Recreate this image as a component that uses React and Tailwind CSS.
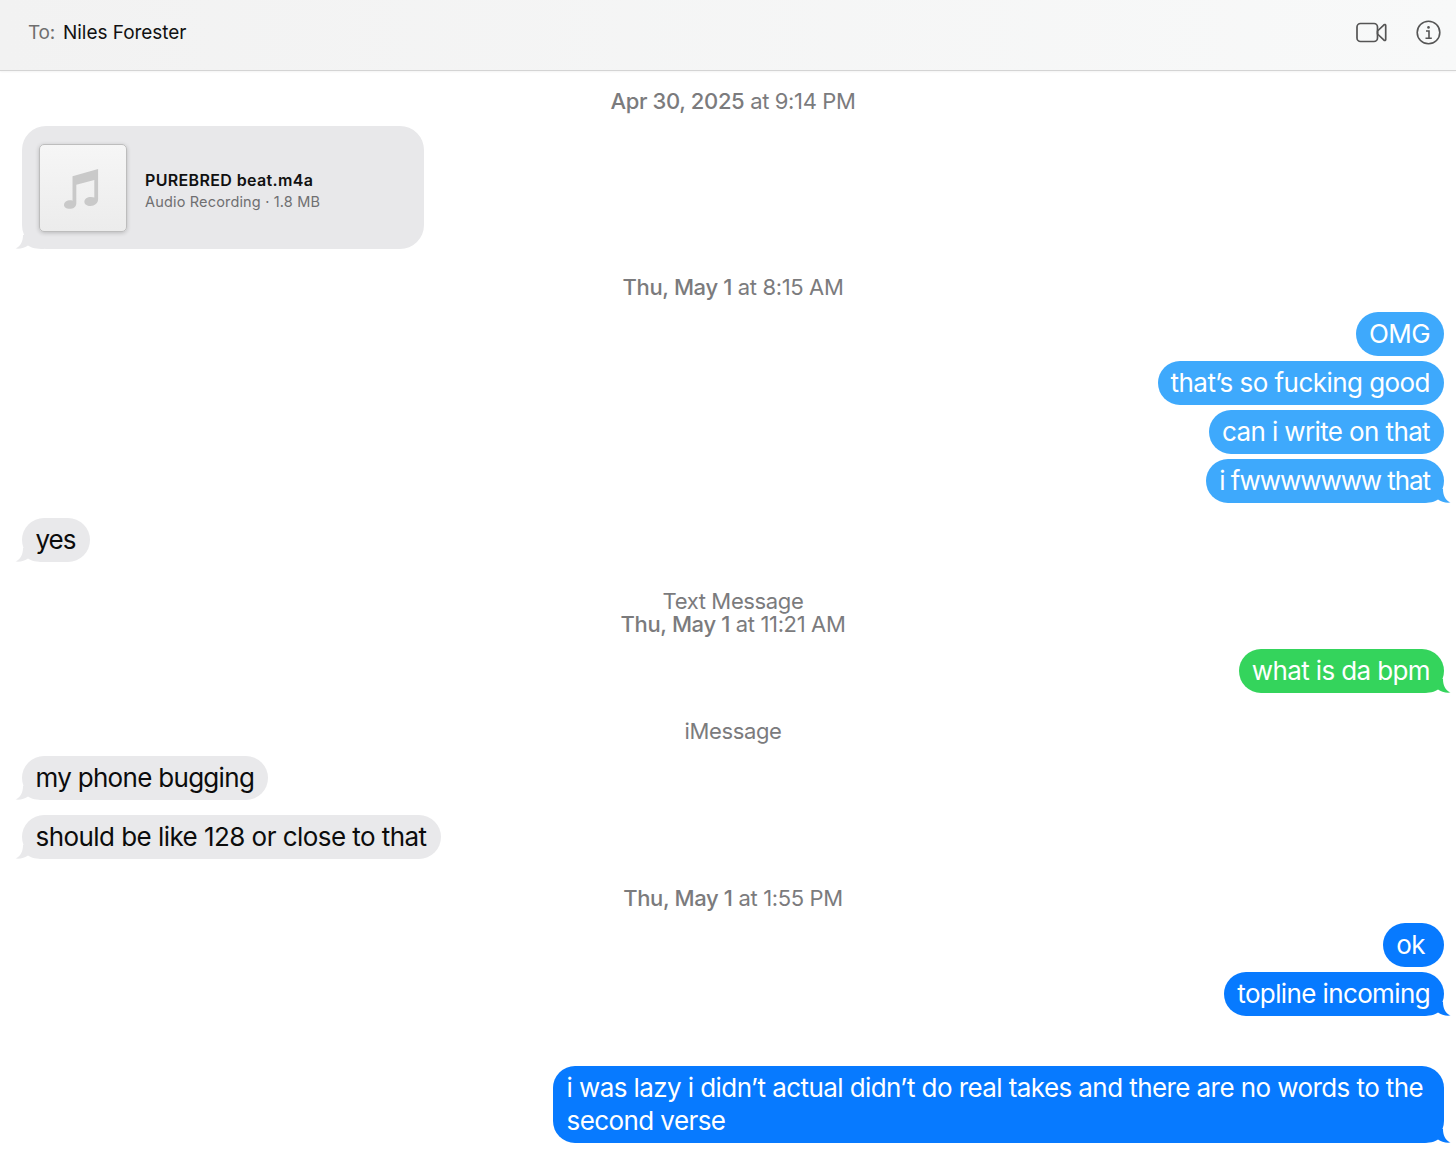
const FONT = { fontFamily: 'Inter, "Noto Sans", sans-serif' };

function Tail({ side, color }) {
  if (side === "left") {
    return (
      <svg className="absolute left-[-7px] bottom-0" width="30" height="14" viewBox="0 0 30 14">
        <path d="M8 0 C8 6 6 11 0.5 13.5 C5 14 10 13 13 10.5 C16 13 22 14 29 14 L29 0 Z" fill={color} />
      </svg>
    );
  }
  return (
    <svg className="absolute right-[-7px] bottom-0" width="30" height="14" viewBox="0 0 30 14">
      <path d="M22 0 C22 6 24 11 29.5 13.5 C25 14 20 13 17 10.5 C14 13 8 14 1 14 L1 0 Z" fill={color} />
    </svg>
  );
}

function Sent({ text, color, tail, className = "", tracking = "tracking-[-0.55px]" }) {
  return (
    <div className={"flex justify-end pr-3 " + className}>
      <div className={"relative h-11 rounded-[22px] pl-[13px] pr-[14px] pb-[2px] flex items-center text-white text-[26px] whitespace-nowrap " + tracking} style={{ backgroundColor: color }}>
        <span className="relative z-10">{text}</span>
        {tail && <Tail side="right" color={color} />}
      </div>
    </div>
  );
}

function Received({ text, className = "", tracking = "tracking-[-0.55px]" }) {
  return (
    <div className={"flex pl-[22px] " + className}>
      <div className={"relative h-11 rounded-[22px] pl-[13.5px] pr-[14px] pb-[1px] flex items-center bg-[#e9e9eb] text-[#0c0c0c] text-[26px] whitespace-nowrap " + tracking}>
        <span className="relative z-10">{text}</span>
        <Tail side="left" color="#e9e9eb" />
      </div>
    </div>
  );
}

function Stamp({ bold, rest, className = "" }) {
  return (
    <div className={"pl-[10px] text-center text-[22px] leading-[23px] text-[#7b7b7d] tracking-[-0.36px] whitespace-nowrap " + className}>
      <span className="font-medium">{bold}</span>
      {rest}
    </div>
  );
}

export default function App() {
  const light = "#3ea9fc";
  const blue = "#077aff";
  const green = "#34d45c";
  return (
    <div className="w-[1456px] h-[1150px] overflow-hidden bg-white" style={FONT}>
      <header className="h-[71px] flex items-center justify-between pl-[28px] pr-[15px] border-b border-[#d4d4d4] bg-gradient-to-r from-[#f2f2f2] to-[#f8f9f9] shadow-[0_1px_2px_rgba(0,0,0,0.05)]">
        <div className="flex items-center gap-[8px] text-[19px] tracking-[-0.05px] mt-[-4px]">
          <span className="text-[#6f6f6f] tracking-[-0.2px]">To:</span>
          <span className="text-[#111]">Niles Forester</span>
        </div>
        <div className="flex items-center gap-[29px] mt-[-6px]">
          <svg width="31" height="21" viewBox="0 0 31 21" fill="none" stroke="#555" strokeWidth="1.7" strokeLinejoin="round">
            <rect x="1" y="1.5" width="20.5" height="18" rx="3.5" />
            <path d="M21.5 9 L28 2.8 C28.8 2.2 29.7 2.6 29.7 3.6 V17.4 C29.7 18.4 28.8 18.8 28 18.2 L21.5 12 Z" />
          </svg>
          <svg width="25" height="25" viewBox="0 0 25 25" fill="none" stroke="#555">
            <circle cx="12.5" cy="12.5" r="11.3" strokeWidth="1.6" />
            <circle cx="12.5" cy="7.4" r="1.3" fill="#555" stroke="none" />
            <path d="M10 11 H13 V18 M9.5 18.2 H15.8" strokeWidth="1.6" />
          </svg>
        </div>
      </header>

      <Stamp className="mt-[19px]" bold="Apr 30, 2025" rest=" at 9:14 PM" />

      <div className="flex pl-[22px] mt-[13px]">
        <div className="relative w-[402px] h-[123px] rounded-[24px] bg-[#e8e8ea] flex items-center pl-[17px] pt-[1px]">
          <div className="relative z-10 w-[88px] h-[88px] rounded-[5px] border border-[#bdbdbd] bg-gradient-to-b from-[#f6f6f6] to-[#ececec] shadow-[0_1px_4px_rgba(0,0,0,0.2)] flex items-center justify-center">
            <svg width="36" height="42" viewBox="0 0 38 44" fill="#c9c9c9" className="mr-[3px]">
              <path d="M9 9.5 L36 2 V34 C36 38 32.5 41 28 41 C24 41 21.5 39 21.5 36.5 C21.5 33.5 24.5 31.5 28.5 31.5 C30 31.5 31 31.7 32 32 V13.5 L13 18.5 V38 C13 42 9.5 44 6 44 C2.5 44 0 42.5 0 40 C0 37 3 35 6.5 35 C7.5 35 8.3 35.1 9 35.4 Z" />
            </svg>
          </div>
          <div className="relative z-10 ml-[18px] flex flex-col mt-[6px]">
            <span className="text-[16px] leading-[22px] font-semibold text-[#111] tracking-[0.35px]">PUREBRED beat.m4a</span>
            <span className="text-[14.5px] leading-[22px] text-[#6f6f71] tracking-[0.17px]">Audio Recording · 1.8 MB</span>
          </div>
          <Tail side="left" color="#e8e8ea" />
        </div>
      </div>

      <Stamp className="mt-[27px]" bold="Thu, May 1" rest=" at 8:15 AM" />
      <Sent className="mt-[13px]" text="OMG" color={light} />
      <Sent className="mt-[5px]" text="that’s so fucking good" color={light} />
      <Sent className="mt-[5px]" text="can i write on that" color={light} tracking="tracking-[-0.62px]" />
      <Sent className="mt-[5px]" text="i fwwwwwww that" color={light} tail tracking="tracking-[-1.07px]" />

      <Received className="mt-[15px]" text="yes" tracking="tracking-[-1px]" />

      <Stamp className="mt-[28px]" rest="Text Message" />
      <Stamp bold="Thu, May 1" rest=" at 11:21 AM" />
      <Sent className="mt-[13px]" text="what is da bpm" color={green} tail tracking="tracking-[-0.62px]" />

      <Stamp className="mt-[27px]" rest="iMessage" />
      <Received className="mt-[13px]" text="my phone bugging" tracking="tracking-[-0.7px]" />
      <Received className="mt-[15px]" text="should be like 128 or close to that" />

      <Stamp className="mt-[28px]" bold="Thu, May 1" rest=" at 1:55 PM" />
      <div className="flex justify-end pr-3 mt-[13px]">
        <div className="h-11 w-[61px] rounded-[22px] pr-[6px] pb-[2px] flex items-center justify-center text-white text-[26px] tracking-[-0.6px]" style={{ backgroundColor: blue }}>ok</div>
      </div>
      <Sent className="mt-[5px]" text="topline incoming" color={blue} tail tracking="tracking-[-0.62px]" />

      <div className="flex justify-end pr-3 mt-[50px]">
        <div className="relative w-[891px] h-[77px] rounded-[22px] pl-[13.5px] pr-[14px] pt-[5px] text-white text-[26px] leading-[33px] tracking-[-0.58px]" style={{ backgroundColor: blue }}>
          <span className="relative z-10">i was lazy i didn’t actual didn’t do real takes and there are no words to the second verse</span>
          <Tail side="right" color={blue} />
        </div>
      </div>
    </div>
  );
}
